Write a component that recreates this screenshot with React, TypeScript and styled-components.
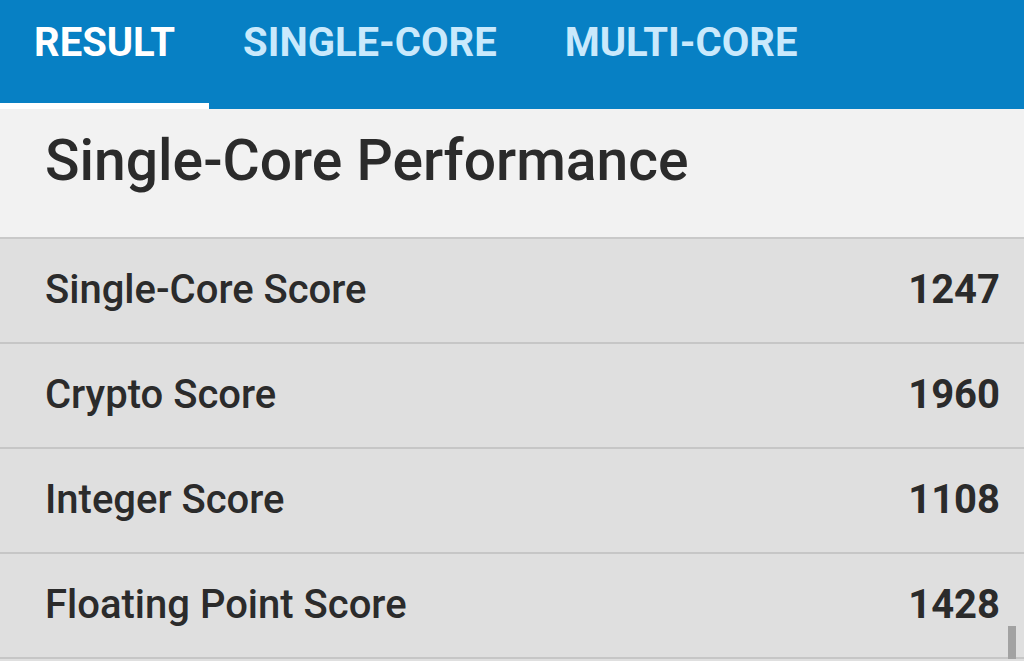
import React from "react";
import styled, { createGlobalStyle } from "styled-components";

const GlobalStyle = createGlobalStyle`
  html, body {
    margin: 0;
    padding: 0;
    background: #dfdfdf;
    font-family: Roboto, "Noto Sans", "Liberation Sans", sans-serif;
    overflow: hidden;
  }
`;

const Page = styled.div`
  position: relative;
  width: 1024px;
  height: 661px;
  overflow: hidden;
  background: #dfdfdf;
`;

const TabBar = styled.nav`
  height: 109px;
  display: flex;
  background: #0780c4;
`;

const Tab = styled.div<{ $active?: boolean }>`
  padding: 19px 34px 0;
  box-sizing: border-box;
  font-size: 40px;
  font-weight: 700;
  color: ${(p) => (p.$active ? "#ffffff" : "#c9e9fc")};
  border-bottom: 6px solid ${(p) => (p.$active ? "#ffffff" : "transparent")};
`;

const Header = styled.header`
  height: 130px;
  box-sizing: border-box;
  padding: 18px 0 0 45px;
  background: #f2f2f2;
  border-bottom: 2px solid #c9c9c9;
`;

const Title = styled.h1`
  margin: 0;
  font-size: 57px;
  font-weight: 500;
  color: #2b2b2b;
  line-height: 1.2;
`;

const Row = styled.div`
  height: 105px;
  box-sizing: border-box;
  display: flex;
  align-items: center;
  justify-content: space-between;
  padding: 0 24px 2px 45px;
  background: #dfdfdf;
  border-bottom: 2px solid #c6c6c6;
  font-size: 40px;
  font-weight: 500;
  color: #2b2b2b;
`;

const Value = styled.span`
  font-weight: 700;
`;

const Scrollbar = styled.div`
  position: absolute;
  right: 8px;
  top: 626px;
  width: 8px;
  height: 33px;
  background: #a2a2a2;
`;

const scores = [
  { label: "Single-Core Score", value: 1247 },
  { label: "Crypto Score", value: 1960 },
  { label: "Integer Score", value: 1108 },
  { label: "Floating Point Score", value: 1428 },
];

export default function App() {
  return (
    <Page>
      <GlobalStyle />
      <TabBar>
        <Tab $active>RESULT</Tab>
        <Tab>SINGLE-CORE</Tab>
        <Tab>MULTI-CORE</Tab>
      </TabBar>
      <Header>
        <Title>Single-Core Performance</Title>
      </Header>
      {scores.map((s) => (
        <Row key={s.label}>
          <span>{s.label}</span>
          <Value>{s.value}</Value>
        </Row>
      ))}
      <Scrollbar />
    </Page>
  );
}
